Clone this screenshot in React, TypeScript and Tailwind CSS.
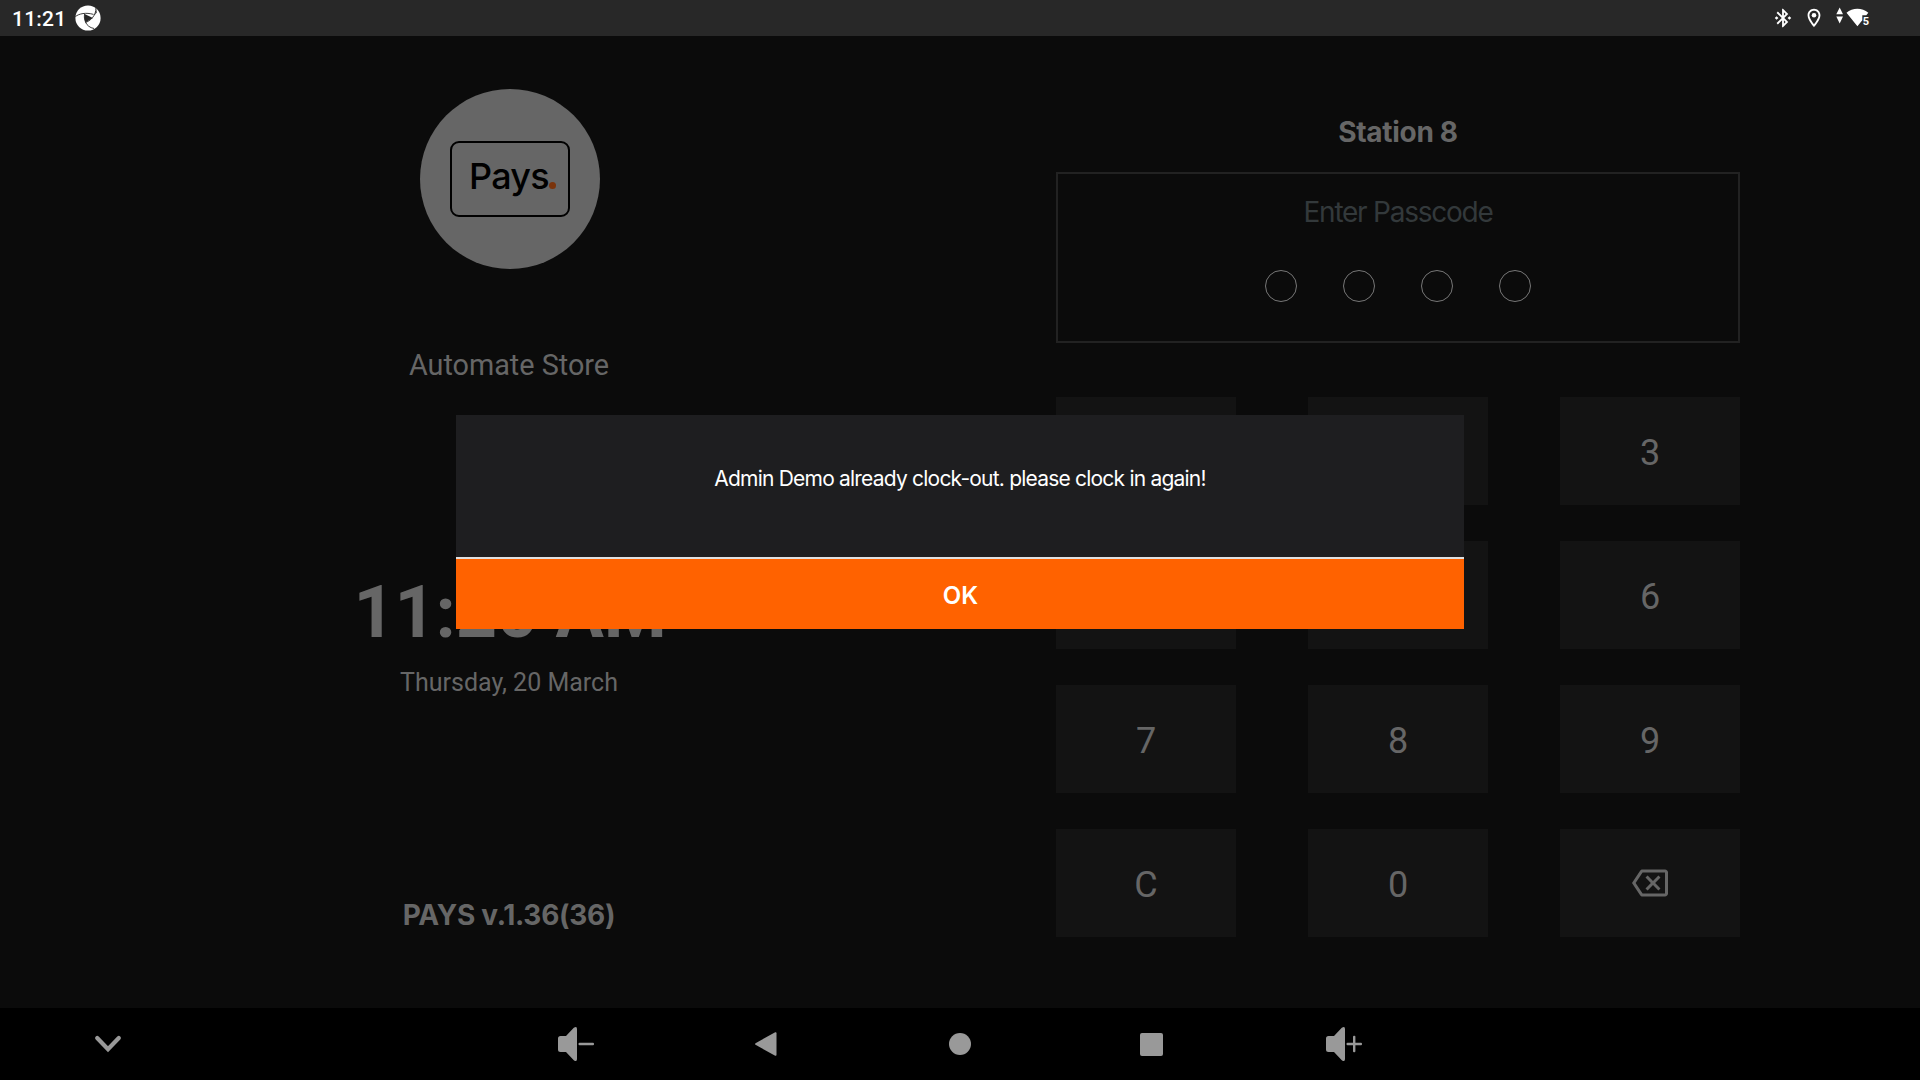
import React from "react";
import { MdOutlineBackspace, MdBluetoothConnected, MdOutlineLocationOn } from "react-icons/md";

const keys = ["1", "2", "3", "4", "5", "6", "7", "8", "9", "C", "0", "back"];

// Keys lying under the open dialog keep their tile but not their face.
const covered = ["1", "2", "4", "5"];

function ShutterIcon() {
  return (
    <svg width="26" height="26" viewBox="0 0 26 26" className="ml-[9px]">
      <circle cx="13" cy="13" r="12.600" fill="#fff" />
      <path d="M9.600 9 18 13 10.400 17.400Q8.800 13 9.600 9Z" fill="#282828" />
      <g fill="none" stroke="#282828" strokeWidth="0.900">
        <path d="M.4 11.600C4 8.600 11 7.200 18.500 9.400" />
        <path d="M20.600.8C22 7 18.500 14.500 10.500 17.600" />
        <path d="M9.600 9C8.600 14 10.500 22 19 23.500" />
      </g>
      <path d="M20.800 2.500C21.400 5 20.800 8 19.400 10.400L21.800 7.600Z" fill="#282828" />
    </svg>
  );
}

function StatusBar() {
  return (
    <header className="flex h-9 items-center justify-between bg-[#282828] pl-3 text-white">
      <div className="flex items-center">
        <span className="pt-[2px] font-[Roboto] text-[21px] font-medium leading-[34px] tracking-[0.2px]">11:21</span>
        <ShutterIcon />
      </div>
      <div className="flex items-center pr-[50px]">
        <MdBluetoothConnected className="size-[22px]" />
        <MdOutlineLocationOn className="ml-[9px] size-[22px]" />
        <svg width="36" height="24" viewBox="0 0 36 24" className="ml-[9px]" fill="#fff">
          <path d="M2.300 8.200 5.700 1.500 9 8.200ZM2.300 10.400H9L5.700 17.500Z" />
          <path d="M12.500 6.700C18.500 1.400 28.200 1.400 34.300 6.700L32.300 9.200H28.300V14.200L23.400 20.300Z" />
          <text x="28.700" y="18.500" fontFamily="Roboto" fontSize="11" fontWeight="700">5</text>
        </svg>
      </div>
    </header>
  );
}

function StorePanel() {
  return (
    <section className="flex w-[1020px] flex-col items-center pt-[53px] font-[Roboto]">
      <div className="flex size-[180px] items-center justify-center rounded-full bg-[#666]">
        <div className="flex h-[76px] w-[120px] rounded-[9px] border-2 border-black pl-[17px] pt-[11px] font-[Inter]">
          <span className="text-[36px] font-medium leading-[44px] tracking-[-0.8px] text-black">Pays</span>
          <span className="mt-[28px] size-[7px] shrink-0 rounded-full bg-[#7a330b]" />
        </div>
      </div>
      <p className="mt-[76px] pr-[2px] text-[28.8px] leading-10">Automate Store</p>
      <p className="mt-[188px] text-[72px] font-bold leading-[80px] tracking-[-0.2px]">11:20 AM</p>
      <p className="mt-[14px] pr-[2px] text-[25px] leading-8">Thursday, 20 March</p>
      <p className="mt-[196px] pr-[2px] font-[Inter] text-[28px] font-bold leading-10 tracking-[-0.3px]">PAYS v.1.36(36)</p>
    </section>
  );
}

function PasscodePanel() {
  return (
    <section className="ml-9 flex w-[684px] flex-col pt-[76px] font-[Inter]">
      <h1 className="text-center text-[28px] font-bold leading-10 tracking-[-0.3px]">Station 8</h1>
      <div className="mt-5 flex h-[171px] flex-col items-center border-2 border-[#222] pt-[18px]">
        <p className="text-[28px] leading-10 tracking-[-1.25px] text-[#33393b]">Enter Passcode</p>
        <div className="mt-[38px] flex gap-[46px]">
          {[0, 1, 2, 3].map((i) => (
            <span key={i} className="size-8 rounded-full border border-[#777]" />
          ))}
        </div>
      </div>
      <div className="mt-[54px] grid grid-cols-3 gap-x-[72px] gap-y-9 font-[Roboto] text-[36px]">
        {keys.map((k) => (
          <button key={k} aria-label={k} className="flex h-[108px] items-center justify-center bg-[#131313] pt-1">
            {k === "back" ? <MdOutlineBackspace className="mb-1 size-9" /> : covered.includes(k) ? null : k}
          </button>
        ))}
      </div>
    </section>
  );
}

function AlertDialog() {
  return (
    <div className="absolute left-[456px] top-[415px] flex h-[214px] w-[1008px] flex-col bg-[#1e1e20] text-center font-[Inter] text-white">
      <p className="h-[142px] pt-[49px] text-[21px] leading-[30px] tracking-[-0.79px]">
        Admin Demo already clock-out. please clock in again!
      </p>
      <button className="h-[72px] border-t-2 border-[#e0e0e0] bg-[#ff6200] pl-px pt-1 text-[24px] font-semibold">OK</button>
    </div>
  );
}

function Speaker({ plus }: { plus?: boolean }) {
  return (
    <svg width="36" height="36" viewBox="0 0 36 36" fill="#999">
      <path d="M0 12.500Q0 10 2.500 10H8L15.800 1.800Q19-.5 19 3V33Q19 36.500 15.800 34.200L8 26H2.500Q0 26 0 23.500Z" />
      <rect x="20.500" y="16.800" width="15.500" height="2.400" rx="1" />
      {plus && <rect x="27" y="9.800" width="2.400" height="16.500" rx="1" />}
    </svg>
  );
}

function NavBar() {
  return (
    <nav className="flex h-[72px] items-center bg-black">
      <svg width="28" height="20" viewBox="0 0 28 20" className="ml-[94px]" fill="none" stroke="#999" strokeWidth="4.200" strokeLinecap="round">
        <path d="M3.200 4 14 15.300 24.800 4" />
      </svg>
      <div className="ml-[436px] flex items-center">
        <Speaker />
        <svg width="22" height="24" viewBox="0 0 22 24" className="ml-[161px]" fill="#999">
          <path d="M.5 11.200 20.200.3Q21.500-.3 21.500 1.200V22.800Q21.500 24.300 20.200 23.700L.5 12.800Q-.4 12 .5 11.200Z" />
        </svg>
        <span className="ml-[172px] size-[22px] rounded-full bg-[#999]" />
        <span className="ml-[169px] size-[23px] rounded-[2px] bg-[#999]" />
        <span className="ml-[163px]">
          <Speaker plus />
        </span>
      </div>
    </nav>
  );
}

export default function App() {
  return (
    <div className="relative flex h-[1080px] w-[1920px] flex-col overflow-hidden bg-[#0b0b0b] text-[#666]">
      <StatusBar />
      <main className="flex h-[972px]">
        <StorePanel />
        <PasscodePanel />
      </main>
      <NavBar />
      <AlertDialog />
    </div>
  );
}
